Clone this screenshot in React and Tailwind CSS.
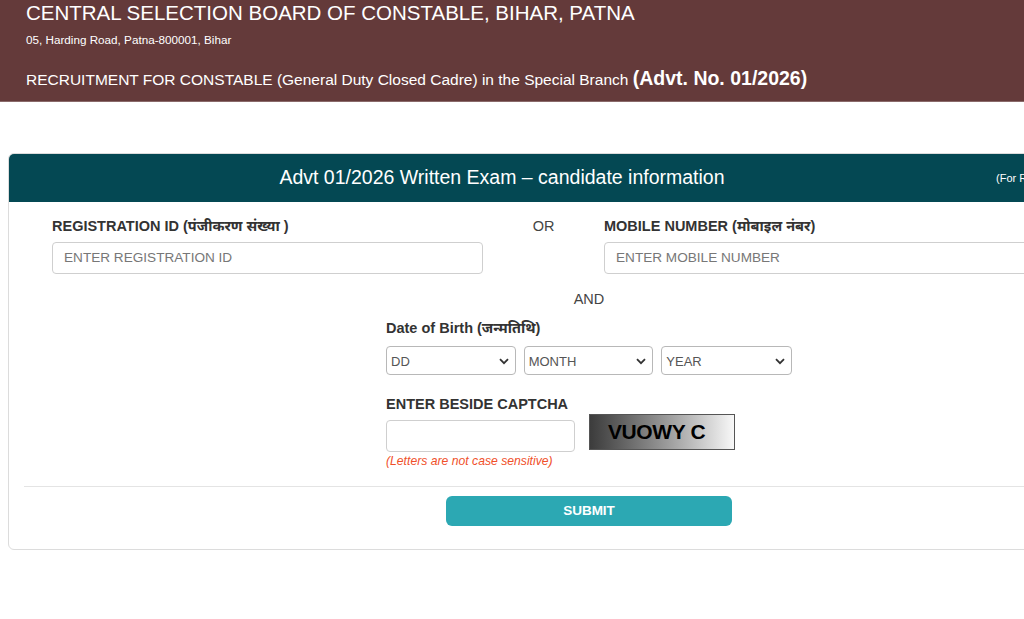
import React from 'react';

const FONT = { fontFamily: '"Liberation Sans", Arial, "Noto Sans", sans-serif' };

function Select({ label, width }) {
  return (
    <div
      className={`relative h-[29px] ${width} rounded-[4px] border border-[#b8b8b8] bg-white`}
    >
      <span className="absolute left-[4px] top-[5px] text-[13px] text-[#555]">{label}</span>
      <svg
        className="absolute right-[6px] top-[11px]"
        width="10"
        height="7"
        viewBox="0 0 10 7"
        fill="none"
      >
        <path d="M1 1.2L5 5.2L9 1.2" stroke="#333" strokeWidth="1.8" />
      </svg>
    </div>
  );
}

export default function App() {
  return (
    <div className="w-[1024px] h-[619px] overflow-hidden bg-white" style={FONT}>
      {/* Top banner */}
      <div className="h-[102px] bg-[#643a3a] border-b border-[#8a6a6a] pl-[26px] pt-[1px] text-white">
        <h1 className="text-[20.5px] leading-[24px]">CENTRAL SELECTION BOARD OF CONSTABLE, BIHAR, PATNA</h1>
        <p className="mt-[8px] text-[11.7px] leading-[14px]">05, Harding Road, Patna-800001, Bihar</p>
        <p className="mt-[20px] text-[15.5px] leading-[22px]">
          RECRUITMENT FOR CONSTABLE (General Duty Closed Cadre) in the Special Branch{' '}
          <span className="text-[19.5px] font-bold">(Advt. No. 01/2026)</span>
        </p>
      </div>

      {/* Card */}
      <div className="ml-[8px] mt-[51px] w-[1162px] rounded-[6px] border border-[#dcdcdc] pb-[23px]">
        <div className="flex h-[48px] items-center rounded-t-[5px] bg-[#044853] text-white">
          <div className="w-[986px] text-center text-[19.5px]">Advt 01/2026 Written Exam – candidate information</div>
          <div className="pl-[1px] text-[11px]">(For Reference only)</div>
        </div>

        <div className="px-[15px]">
          {/* Registration / Mobile row */}
          <div className="flex pt-[15px]">
            <div className="ml-[28px] w-[431px]">
              <label className="block text-[14.5px] font-bold leading-[18px] text-[#333]">
                REGISTRATION ID (पंजीकरण संख्या )
              </label>
              <div className="mt-[7px] flex h-[32px] items-center rounded-[4px] border border-[#cfcfcf] px-[11px] text-[13.6px] text-[#777]">
                ENTER REGISTRATION ID
              </div>
            </div>
            <div className="w-[121px] text-center text-[14.5px] leading-[18px] text-[#444]">OR</div>
            <div className="w-[431px]">
              <label className="block text-[14.5px] font-bold leading-[18px] text-[#333]">
                MOBILE NUMBER (मोबाइल नंबर)
              </label>
              <div className="mt-[7px] flex h-[32px] items-center rounded-[4px] border border-[#cfcfcf] px-[11px] text-[13.6px] text-[#777]">
                ENTER MOBILE NUMBER
              </div>
            </div>
          </div>

          <div className="mt-[16px] text-center text-[14.5px] leading-[18px] text-[#444]">AND</div>

          {/* DOB + Captcha */}
          <div className="mx-auto mt-[11px] w-[406px]">
            <label className="block text-[14.5px] font-bold leading-[18px] text-[#333]">Date of Birth (जन्मतिथि)</label>
            <div className="mt-[9px] flex gap-[8px]">
              <Select label="DD" width="w-[130px]" />
              <Select label="MONTH" width="w-[130px]" />
              <Select label="YEAR" width="w-[131px]" />
            </div>

            <label className="mt-[20px] block text-[14.5px] font-bold leading-[18px] text-[#333]">ENTER BESIDE CAPTCHA</label>
            <div className="flex">
              <div>
                <div className="mt-[7px] h-[32px] w-[189px] rounded-[4px] border border-[#cfcfcf]" />
                <p className="mt-[1px] text-[12.2px] italic leading-[16px] text-[#f0502a]">
                  (Letters are not case sensitive)
                </p>
              </div>
              <div className="ml-[14px] mt-[1px] flex h-[36px] w-[146px] items-center border border-[#555] bg-gradient-to-r from-[#3c3c3c] to-[#f8f8f8] pl-[18px]">
                <span className="text-[21px] font-bold tracking-[-0.4px] text-black">VUOWY C</span>
              </div>
            </div>
          </div>

          <div className="mt-[17px] border-t border-[#e4e4e4]" />

          <div className="mt-[9px] flex justify-center">
            <button className="h-[30px] w-[286px] rounded-[6px] bg-[#2ca8b3] text-[13.5px] font-bold text-white">
              SUBMIT
            </button>
          </div>
        </div>
      </div>
    </div>
  );
}
